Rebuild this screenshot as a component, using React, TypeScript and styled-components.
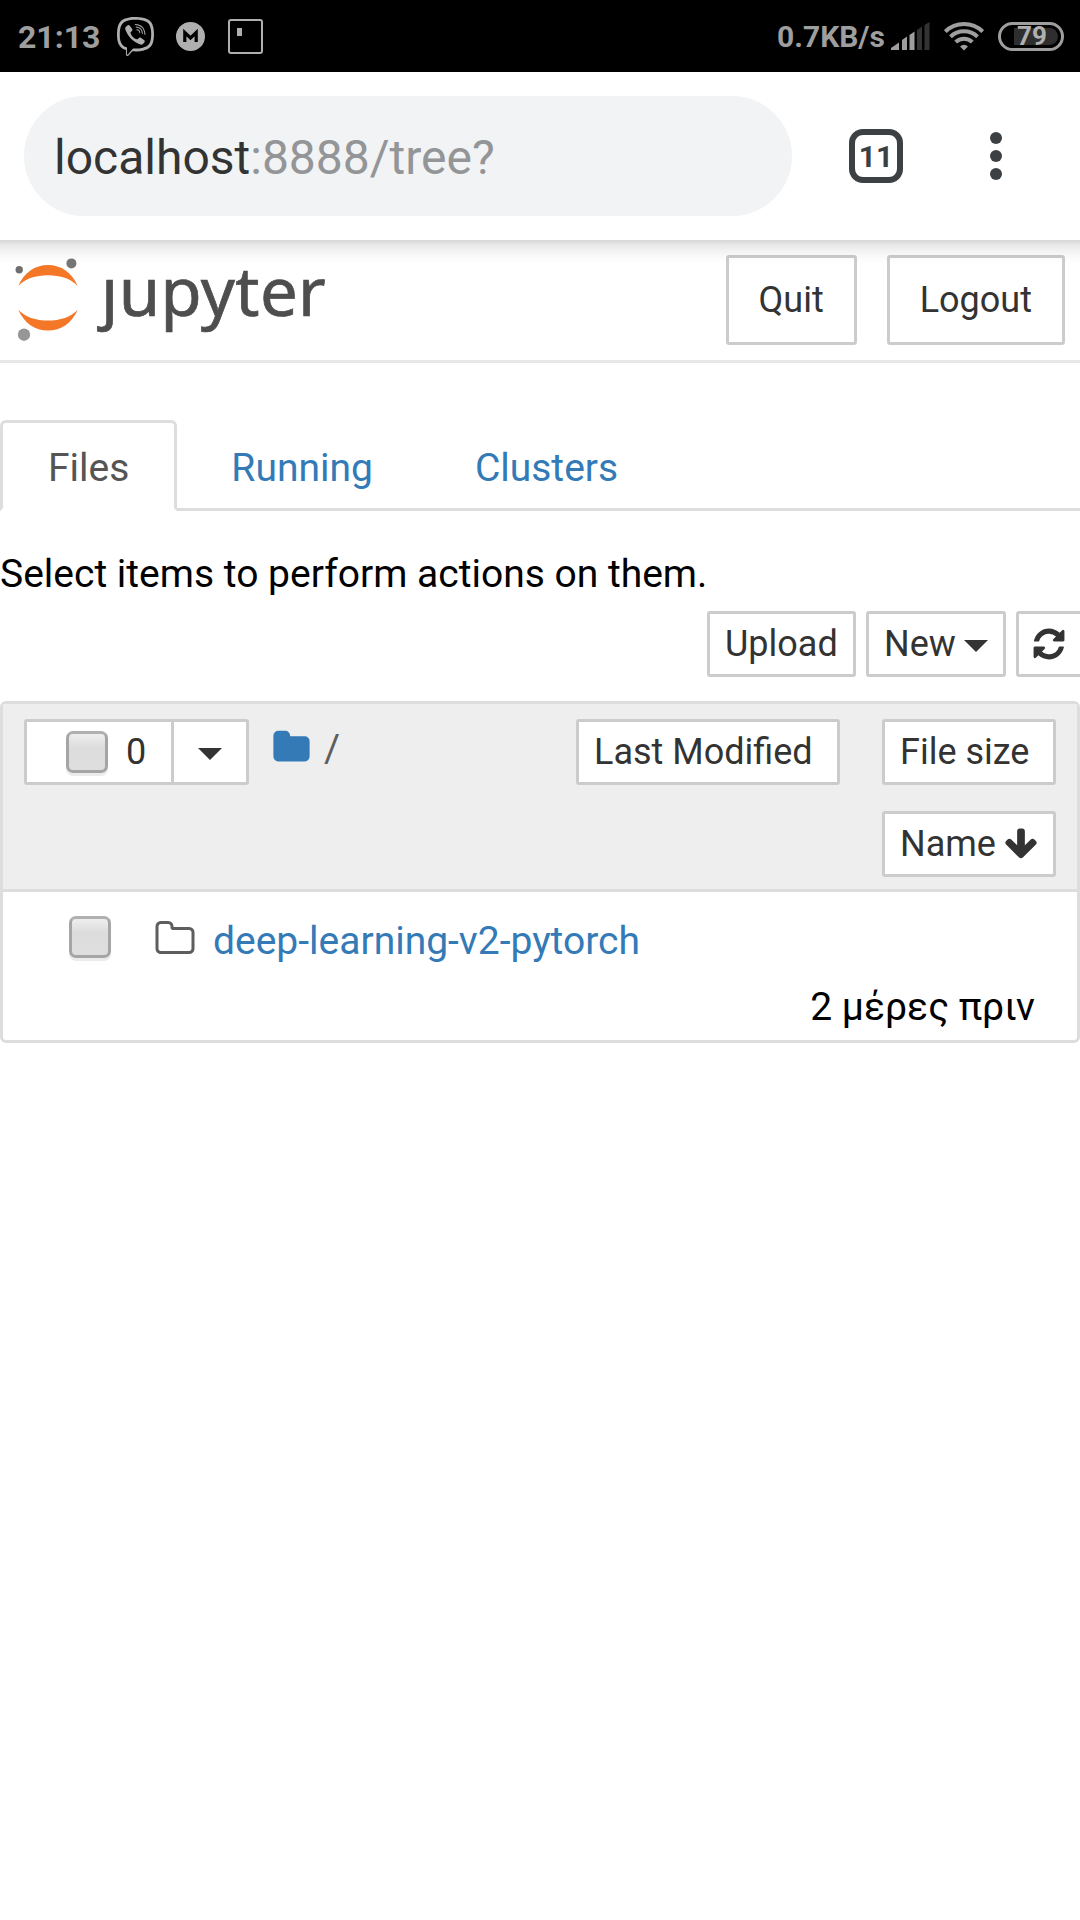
import React from "react";
import styled, { createGlobalStyle } from "styled-components";
import { FaViber } from "react-icons/fa";

const GlobalStyle = createGlobalStyle`
  * { box-sizing: border-box; }
  body { margin: 0; background: #fff; }
`;

const Screen = styled.div`
  width: 1080px;
  height: 1920px;
  overflow: hidden;
  background: #fff;
  color: #000;
  font-family: Roboto, "Noto Sans", sans-serif;
  font-size: 39px;
`;

const StatusBar = styled.header`
  display: flex;
  align-items: center;
  justify-content: space-between;
  height: 72px;
  padding: 0 16px 0 18px;
  background: #000;
  color: #9e9e9e;
`;

const StatusGroup = styled.div`
  display: flex;
  align-items: center;
  height: 72px;
`;

const StatusText = styled.span<{ $size: number; $width: number }>`
  width: ${(p) => p.$width}px;
  padding-top: 1px;
  font-size: ${(p) => p.$size}px;
  font-weight: 700;
  line-height: 72px;
  white-space: nowrap;
`;

const StatusIcon = styled.span<{ $left: number }>`
  display: flex;
  margin-left: ${(p) => p.$left}px;
  color: #afafaf;
`;

const AppSquare = styled.span`
  width: 35px;
  height: 35px;
  margin-left: 23px;
  padding: 7px 0 0 7px;
  border: 2px solid #afafaf;
  border-radius: 3px;

  &::before {
    content: "";
    display: block;
    width: 5px;
    height: 8px;
    background: #afafaf;
  }
`;

const Battery = styled.span`
  display: flex;
  width: 66px;
  height: 29px;
  margin-left: 14px;
  padding: 3px 3px 3px 13px;
  border: 3px solid #9e9e9e;
  border-radius: 15px;
`;

const BatteryLevel = styled.span`
  width: 44px;
  height: 17px;
  padding-left: 3px;
  border-radius: 0 9px 9px 0;
  background: #2e2e2e;
  color: #b0b0b0;
  font-size: 26px;
  font-weight: 700;
  line-height: 17px;
`;

const Toolbar = styled.div`
  position: relative;
  display: flex;
  align-items: center;
  height: 168px;
  padding: 0 78px 0 24px;
  background: #fff;

  &::after {
    content: "";
    position: absolute;
    top: 100%;
    left: 0;
    right: 0;
    height: 24px;
    background: linear-gradient(
      rgba(0, 0, 0, 0.16),
      rgba(0, 0, 0, 0.09) 5px,
      rgba(0, 0, 0, 0.05) 11px,
      rgba(0, 0, 0, 0.015) 18px,
      transparent
    );
  }
`;

const AddressBar = styled.div`
  width: 768px;
  height: 120px;
  padding: 3px 0 0 30px;
  border-radius: 60px;
  background: #f1f3f4;
  color: #333;
  font-size: 48px;
  line-height: 118px;
  white-space: nowrap;
`;

const UrlRest = styled.span`
  color: #949597;
`;

const TabCount = styled.div`
  width: 54px;
  height: 54px;
  margin-left: 57px;
  padding-top: 1px;
  border: 6px solid #3c4043;
  border-radius: 14px;
  color: #3c4043;
  font-size: 30px;
  font-weight: 700;
  line-height: 42px;
  text-align: center;
`;

const MenuDots = styled.div`
  display: flex;
  flex-direction: column;
  gap: 6px;
  margin-left: 87px;
`;

const Dot = styled.i`
  width: 12px;
  height: 12px;
  border-radius: 50%;
  background: #3c4043;
`;

const SiteHeader = styled.div`
  display: flex;
  height: 123px;
  padding: 15px 15px 0 0;
  border-bottom: 3px solid #e7e7e7;
`;

const Brand = styled.div`
  display: flex;
  flex: 1;
  height: 90px;
`;

const Wordmark = styled.span`
  margin-left: 21px;
  color: #4e4e4e;
  font-family: "Noto Sans", sans-serif;
  font-size: 67px;
  letter-spacing: 0.4px;
  line-height: 71px;
  -webkit-text-stroke: 0.7px #4e4e4e;
`;

const HeaderButton = styled.button`
  height: 90px;
  margin: 0 0 0 30px;
  padding: 0 30px;
  border: 3px solid #ccc;
  border-radius: 3px;
  background: #fff;
  color: #333;
  font: 36px/84px Roboto, sans-serif;
`;

const Tabs = styled.nav`
  display: flex;
  height: 91px;
  margin-top: 57px;
  border-bottom: 3px solid #ddd;
`;

const Tab = styled.a<{ $active?: boolean }>`
  height: 91px;
  margin-right: 6px;
  padding: 0 45px;
  border: 3px solid ${(p) => (p.$active ? "#ddd" : "transparent")};
  border-bottom-color: ${(p) => (p.$active ? "#fff" : "transparent")};
  border-radius: 6px 6px 0 0;
  background: ${(p) => (p.$active ? "#fff" : "transparent")};
  color: ${(p) => (p.$active ? "#555" : "#337ab7")};
  line-height: 90px;
`;

const Hint = styled.p`
  height: 56px;
  margin: 34px 0 0;
  line-height: 58px;
`;

const Actions = styled.div`
  display: flex;
  width: 1090px;
  gap: 10px;
  margin-top: 10px;
  padding-left: 707px;
`;

const SmallButton = styled.button<{ $width: number }>`
  display: flex;
  align-items: center;
  flex: none;
  width: ${(p) => p.$width}px;
  height: 66px;
  margin: 0;
  padding: 0 0 1px 15px;
  border: 3px solid #ccc;
  border-radius: 3px;
  background: #fff;
  color: #333;
  font: 36px/58px Roboto, sans-serif;
  white-space: nowrap;
`;

const Caret = styled.i<{ $left: number; $top?: number }>`
  margin: ${(p) => p.$top ?? 4}px 0 0 ${(p) => p.$left}px;
  border: 12px solid transparent;
  border-top-color: #333;
  border-bottom: 0;
`;

const Glyph = styled.svg<{ $size: number; $left: number }>`
  flex: none;
  width: ${(p) => p.$size}px;
  height: ${(p) => p.$size}px;
  margin-left: ${(p) => p.$left}px;
  fill: currentColor;
`;

const Listing = styled.section`
  height: 342px;
  margin-top: 24px;
  border: 3px solid #ddd;
  border-radius: 6px;
`;

const ListHeader = styled.div`
  display: flex;
  height: 188px;
  padding: 15px 21px 0;
  border-bottom: 3px solid #ddd;
  background: #eee;
`;

const SelectGroup = styled.div`
  display: flex;
  width: 225px;
  height: 66px;
  border: 3px solid #ccc;
  border-radius: 3px;
  background: #fff;
`;

const SelectAll = styled.div`
  display: flex;
  width: 147px;
  padding: 9px 0 0 39px;
  border-right: 3px solid #ccc;
  color: #333;
  font-size: 36px;
  line-height: 42px;
`;

const Count = styled.span`
  margin-left: 18px;
`;

const Checkbox = styled.span`
  flex: none;
  width: 42px;
  height: 42px;
  border: 3px solid #a5a5a5;
  border-top-color: #b0b0b0;
  border-radius: 7px;
  background: linear-gradient(#eee 0, #dcdcdc 38%, #dedede 100%);
  box-shadow: 0 3px 0 rgba(0, 0, 0, 0.08);
`;

const Crumbs = styled.div`
  display: flex;
  align-items: flex-start;
  flex: 1;
  height: 60px;
  padding: 9px 0 0 23px;
  color: #337ab7;
`;

const Slash = styled.span`
  margin-left: 13px;
  color: #5e5e5e;
  line-height: 43px;
`;

const SortGrid = styled.div`
  display: grid;
  grid-template-columns: 264px 174px;
  grid-auto-rows: 66px;
  gap: 26px 42px;
`;

const NameCell = styled.div`
  grid-column: 2;
`;

const FileRow = styled.div`
  display: flex;
  height: 66px;
  padding: 24px 0 0 66px;
`;

const FileIcon = styled.span`
  display: flex;
  margin: 2px 0 0 43px;
  color: #5e5e5e;
`;

const FileName = styled.a`
  margin-left: 17px;
  color: #337ab7;
  line-height: 50px;
`;

const Modified = styled.div`
  padding-right: 42px;
  line-height: 98px;
  text-align: right;
`;

const FOLDER =
  "M1728 608v704q0 92-66 158t-158 66h-1216q-92 0-158-66t-66-158v-960q0-92 66-158t158-66h320q92 0 158 66t66 158v32h672q92 0 158 66t66 158z";
const FOLDER_OPEN =
  "M1600 1312v-704q0-40-28-68t-68-28h-704q-40 0-68-28t-28-68v-64q0-40-28-68t-68-28h-320q-40 0-68 28t-28 68v960q0 40 28 68t68 28h1216q40 0 68-28t28-68zm128-704v704q0 92-66 158t-158 66h-1216q-92 0-158-66t-66-158v-960q0-92 66-158t158-66h320q92 0 158 66t66 158v32h672q92 0 158 66t66 158z";
const ARROW_DOWN =
  "M1675 832q0 53-37 90l-651 652q-39 37-91 37-53 0-90-37l-651-652q-38-36-38-90 0-53 38-91l74-75q39-37 91-37 53 0 90 37l294 294v-704q0-52 38-90t90-38h128q52 0 90 38t38 90v704l294-294q37-37 90-37 52 0 91 37l75 75q37 39 37 91z";
const REFRESH =
  "M1639 1056q0 5-1 7-64 268-268 434.5t-478 166.5q-146 0-282.5-55t-243.5-157l-129 129q-19 19-45 19t-45-19-19-45v-448q0-26 19-45t45-19h448q26 0 45 19t19 45-19 45l-137 137q71 66 161 102t187 36q134 0 250-65t186-179q11-17 53-117 8-23 30-23h192q13 0 22.5 9.5t9.5 22.5zm25-800v448q0 26-19 45t-45 19h-448q-26 0-45-19t-19-45 19-45l138-138q-148-137-349-137-134 0-250 65t-186 179q-11 17-53 117-8 23-30 23h-199q-13 0-22.5-9.5t-9.5-22.5v-7q65-268 270-434.5t480-166.5q146 0 284 55.5t245 156.5l130-129q19-19 45-19t45 19 19 45z";

const Icon = ({ d, size, left = 0 }: { d: string; size: number; left?: number }) => (
  <Glyph $size={size} $left={left} viewBox="0 0 1792 1792">
    <path d={d} />
  </Glyph>
);

const PlanetLogo = () => (
  <svg width="80" height="90" viewBox="0 255 80 90">
    <path fill="#f37726" d="M18.3 286C24 272.500 35 265 48 265S72 272.500 77.700 286C71 278.500 60 275.200 48 275.200S25 278.500 18.300 286Z" />
    <path fill="#f37726" d="M18.3 309.700C24 323 35 330.500 48 330.500S72 323 77.700 309.700C71 317.200 60 320.500 48 320.500S25 317.200 18.300 309.700Z" />
    <circle cx="19.200" cy="269.800" r="3.700" fill="#6f6f6f" />
    <circle cx="71.400" cy="263.400" r="5" fill="#767677" />
    <circle cx="24" cy="334.700" r="6.200" fill="#989798" />
  </svg>
);

const MegaLogo = () => (
  <svg width="29" height="29" viewBox="0 0 29 29">
    <circle cx="14.500" cy="14.500" r="14.500" fill="#afafaf" />
    <path d="M8.800 20V10.500L14.500 16L20.200 10.500V20" fill="none" stroke="#000" strokeWidth="3.200" />
  </svg>
);

const Signal = () => (
  <svg width="39" height="28" viewBox="0 0 39 28">
    <g fill="#9e9e9e">
      <path d="M0 28V26L8 20.500V28Z" />
      <path d="M11 28V18L16 14.500V28Z" />
      <path d="M18.500 28V13L23.500 9.500V28Z" />
    </g>
    <g fill="#333">
      <path d="M26 28V8L31 4.500V28Z" />
      <path d="M33.500 28V3L38.500 0V28Z" />
    </g>
  </svg>
);

const Wifi = () => (
  <svg width="40" height="30" viewBox="0 0 40 30" fill="none" stroke="#9e9e9e" strokeWidth="4">
    <path d="M1.300 10.500A27 27 0 0 1 38.700 10.500" />
    <path d="M6.500 15.800A19.500 19.500 0 0 1 33.500 15.800" />
    <path d="M11.700 21A12 12 0 0 1 28.300 21" />
    <path d="M20 29.500L16 25.500Q20 22 24 25.500Z" fill="#9e9e9e" stroke="none" />
  </svg>
);

export default function App() {
  return (
    <Screen>
      <GlobalStyle />
      <StatusBar>
        <StatusGroup>
          <StatusText $size={32} $width={81}>21:13</StatusText>
          <StatusIcon $left={17}><FaViber size={39} /></StatusIcon>
          <StatusIcon $left={21}><MegaLogo /></StatusIcon>
          <AppSquare />
        </StatusGroup>
        <StatusGroup>
          <StatusText $size={30} $width={114}>0.7KB/s</StatusText>
          <Signal />
          <StatusIcon $left={14}><Wifi /></StatusIcon>
          <Battery><BatteryLevel>79</BatteryLevel></Battery>
        </StatusGroup>
      </StatusBar>

      <Toolbar>
        <AddressBar>localhost<UrlRest>:8888/tree?</UrlRest></AddressBar>
        <TabCount>11</TabCount>
        <MenuDots><Dot /><Dot /><Dot /></MenuDots>
      </Toolbar>

      <SiteHeader>
        <Brand>
          <PlanetLogo />
          <Wordmark>ȷupyter</Wordmark>
        </Brand>
        <HeaderButton>Quit</HeaderButton>
        <HeaderButton>Logout</HeaderButton>
      </SiteHeader>

      <Tabs>
        <Tab $active>Files</Tab>
        <Tab>Running</Tab>
        <Tab>Clusters</Tab>
      </Tabs>
      <Hint>Select items to perform actions on them.</Hint>
      <Actions>
        <SmallButton $width={149}>Upload</SmallButton>
        <SmallButton $width={140}>New<Caret $left={8} /></SmallButton>
        <SmallButton $width={67}><Icon d={REFRESH} size={36} left={-3} /></SmallButton>
      </Actions>

      <Listing>
        <ListHeader>
          <SelectGroup>
            <SelectAll><Checkbox /><Count>0</Count></SelectAll>
            <Caret $left={24} $top={26} />
          </SelectGroup>
          <Crumbs>
            <Icon d={FOLDER} size={39} />
            <Slash>/</Slash>
          </Crumbs>
          <SortGrid>
            <SmallButton $width={264}>Last Modified</SmallButton>
            <SmallButton $width={174}>File size</SmallButton>
            <NameCell>
              <SmallButton $width={174}>Name&nbsp;<Icon d={ARROW_DOWN} size={36} left={-2} /></SmallButton>
            </NameCell>
          </SortGrid>
        </ListHeader>
        <FileRow>
          <Checkbox />
          <FileIcon><Icon d={FOLDER_OPEN} size={42} /></FileIcon>
          <FileName>deep-learning-v2-pytorch</FileName>
        </FileRow>
        <Modified>2 μέρες πριν</Modified>
      </Listing>
    </Screen>
  );
}
